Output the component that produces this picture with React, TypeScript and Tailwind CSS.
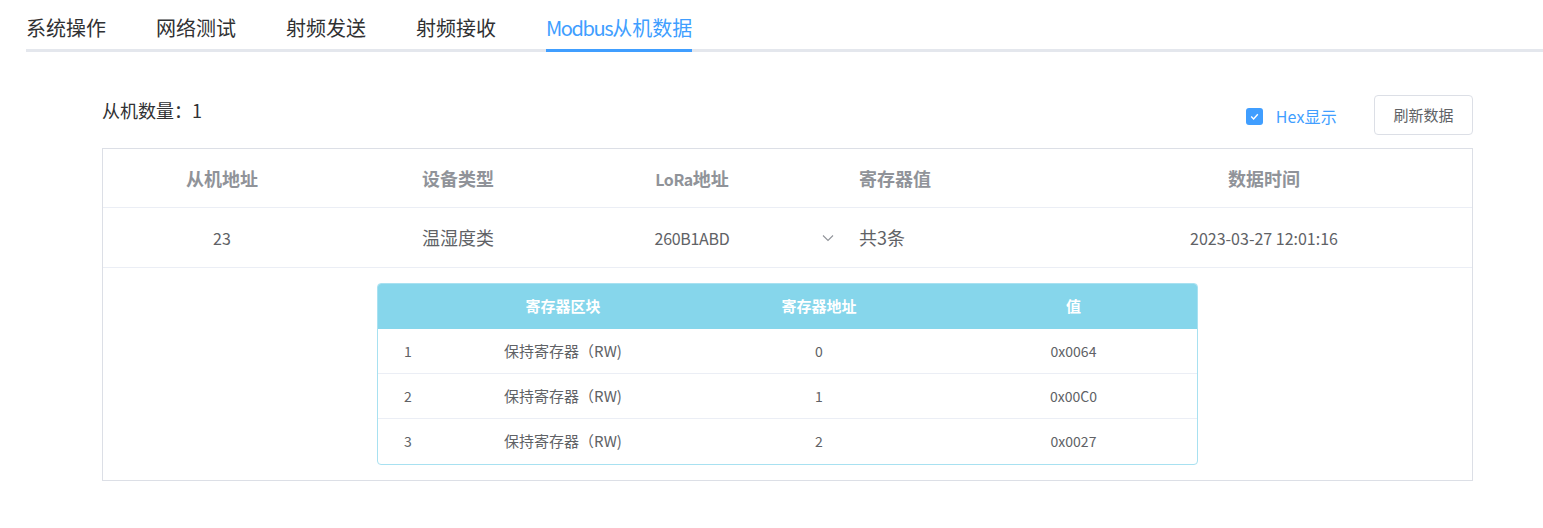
import React from "react";

const font = { fontFamily: '"Noto Sans CJK SC", "Noto Sans", sans-serif' };

const tabs = ["系统操作", "网络测试", "射频发送", "射频接收"];

const rows = [
  { i: "1", addr: "0", val: "0x0064" },
  { i: "2", addr: "1", val: "0x00C0" },
  { i: "3", addr: "2", val: "0x0027" },
];

export default function App() {
  return (
    <div className="w-[1543px] h-[528px] bg-white overflow-hidden" style={font}>
      {/* Tabs */}
      <div className="ml-[26px] flex gap-[50px] border-b-[3px] border-[#e4e7ed] pt-[10px]">
        {tabs.map((t) => (
          <div
            key={t}
            className="h-[42px] leading-[36px] text-[20px] -mb-[3px] border-b-[3px] text-[#303133] border-transparent"
          >
            {t}
          </div>
        ))}
        <div className="h-[42px] leading-[36px] text-[20px] -mb-[3px] border-b-[3px] text-[#409eff] border-[#409eff]">
          <span className="tracking-[-1.4px]">Modbus</span>从机数据
        </div>
      </div>

      {/* Content */}
      <div className="ml-[102px] w-[1371px] pt-[43px]">
        <div className="flex justify-between items-start h-[40px]">
          <div className="text-[18px] leading-[30px] text-[#303133]">从机数量：1</div>
          <div className="flex items-center h-[40px]">
            <div className="flex items-center mt-[2px]">
              <div className="w-[17px] h-[17px] rounded-[3px] bg-[#409eff] flex items-center justify-center">
                <svg width="11" height="11" viewBox="0 0 11 11">
                  <polyline points="2.2,5.6 4.6,7.9 8.8,3.3" fill="none" stroke="white" strokeWidth="1.4" />
                </svg>
              </div>
              <span className="ml-[13px] text-[16px] tracking-[0.2px] text-[#409eff]">Hex显示</span>
            </div>
            <button className="ml-[37px] w-[99px] h-[40px] border border-[#dcdfe6] rounded-[4px] text-[15px] text-[#606266] bg-white">
              刷新数据
            </button>
          </div>
        </div>

        {/* Table */}
        <div className="mt-[13px] border border-[#dcdfe6]">
          <div className="grid grid-cols-[238px_234px_234px_37px_210px_1fr] h-[59px] items-center border-b border-[#ebeef5] text-[18px] font-bold text-[#909399]">
            <div className="text-center">从机地址</div>
            <div className="text-center">设备类型</div>
            <div className="text-center">
              <span className="text-[16px] tracking-[-0.4px]">LoRa</span>地址
            </div>
            <div></div>
            <div className="pl-[13px]">寄存器值</div>
            <div className="text-center">数据时间</div>
          </div>
          <div className="grid grid-cols-[238px_234px_234px_37px_210px_1fr] h-[60px] items-center border-b border-[#ebeef5] text-[18px] text-[#606266]">
            <div className="text-center text-[16px]">23</div>
            <div className="text-center">温湿度类</div>
            <div className="text-center text-[16px] tracking-[-0.3px]">260B1ABD</div>
            <div className="flex justify-center">
              <svg width="12" height="8" viewBox="0 0 12 8">
                <polyline points="1,1.5 6,6.5 11,1.5" fill="none" stroke="#909399" strokeWidth="1.1" />
              </svg>
            </div>
            <div className="pl-[13px]">共3条</div>
            <div className="text-center text-[16px]">2023-03-27 12:01:16</div>
          </div>

          <div className="pt-[15px] pb-[15px] flex justify-center">
            <div className="w-[821px] border border-[#a8e1f1] rounded-[4px] overflow-hidden text-[15px]">
              <div className="grid grid-cols-[60px_250px_262px_1fr] h-[45px] items-center bg-[#86d6eb] text-white font-bold">
                <div></div>
                <div className="text-center">寄存器区块</div>
                <div className="text-center">寄存器地址</div>
                <div className="text-center">值</div>
              </div>
              {rows.map((r, k) => (
                <div
                  key={r.i}
                  className={
                    "grid grid-cols-[60px_250px_262px_1fr] h-[45px] items-center text-[#606266] " +
                    (k < 2 ? "border-b border-[#ebeef5]" : "")
                  }
                >
                  <div className="text-center text-[14px]">{r.i}</div>
                  <div className="text-center">保持寄存器（RW)</div>
                  <div className="text-center text-[14px]">{r.addr}</div>
                  <div className="text-center text-[14px]">{r.val}</div>
                </div>
              ))}
            </div>
          </div>
        </div>
      </div>
    </div>
  );
}
